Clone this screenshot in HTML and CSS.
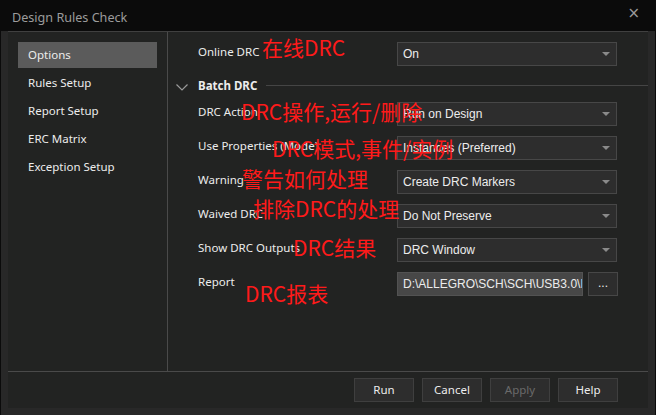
FILE: index.html
```html
<!DOCTYPE html>
<html>
<head>
<meta charset="utf-8">
<link rel="stylesheet" href="styles.css">
</head>
<body>
<div class="window">
  <div class="titlebar">
    <span class="title">Design Rules Check</span>
    <span class="close">×</span>
  </div>
  <div class="frame">
    <div class="inner">
      <div class="main">
        <nav class="sidebar">
          <div class="nav-item active">Options</div>
          <div class="nav-item">Rules Setup</div>
          <div class="nav-item">Report Setup</div>
          <div class="nav-item">ERC Matrix</div>
          <div class="nav-item">Exception Setup</div>
        </nav>
        <section class="content">
          <div class="row">
            <span class="label">Online DRC</span>
            <div class="select"><span>On</span><i class="arrow"></i></div>
          </div>
          <div class="group-head">
            <svg class="chev" width="12" height="7" viewBox="0 0 12 7"><path d="M0.5 0.5 L6 6 L11.5 0.5" fill="none" stroke="#9a9a9a" stroke-width="1.2"/></svg>
            <span class="group-title">Batch DRC</span>
            <span class="group-line"></span>
          </div>
          <div class="rows">
            <div class="row">
              <span class="label">DRC Action</span>
              <div class="select"><span>Run on Design</span><i class="arrow"></i></div>
            </div>
            <div class="row">
              <span class="label">Use Properties (Mode)</span>
              <div class="select"><span>Instances (Preferred)</span><i class="arrow"></i></div>
            </div>
            <div class="row">
              <span class="label">Warning</span>
              <div class="select"><span>Create DRC Markers</span><i class="arrow"></i></div>
            </div>
            <div class="row">
              <span class="label">Waived DRC</span>
              <div class="select"><span>Do Not Preserve</span><i class="arrow"></i></div>
            </div>
            <div class="row">
              <span class="label">Show DRC Outputs</span>
              <div class="select"><span>DRC Window</span><i class="arrow"></i></div>
            </div>
            <div class="row">
              <span class="label">Report</span>
              <div class="file">
                <div class="path">D:\ALLEGRO\SCH\SCH\USB3.0\DRC.rpt</div>
                <div class="browse">...</div>
              </div>
            </div>
          </div>
        </section>
      </div>
      <footer class="footer">
        <button class="btn">Run</button>
        <button class="btn">Cancel</button>
        <button class="btn disabled">Apply</button>
        <button class="btn">Help</button>
      </footer>
    </div>
  </div>
  <span class="note n1">在线DRC</span>
  <span class="note n2">DRC操作,运行/删除</span>
  <span class="note n3">DRC模式,事件/实例</span>
  <span class="note n4">警告如何处理</span>
  <span class="note n5">排除DRC的处理</span>
  <span class="note n6">DRC结果</span>
  <span class="note n7">DRC报表</span>
</div>
</body>
</html>
```
FILE: styles.css
```css
* { box-sizing: border-box; }
html, body { margin: 0; padding: 0; background: #0b0b0b; }
body { font-family: "Noto Sans", "Open Sans", sans-serif; }

.window {
  position: relative;
  width: 656px;
  height: 415px;
  background: #0b0b0b;
  overflow: hidden;
}

.titlebar {
  height: 31px;
  display: flex;
  align-items: center;
  justify-content: space-between;
  padding: 0 16px 0 12px;
}
.title { color: #9c9c9c; font-size: 12.6px; margin-top: 4px; }
.close { color: #9a9a9a; font-size: 15px; font-family: "DejaVu Sans", sans-serif; margin-top: -6px; }

.frame {
  height: 384px;
  margin-left: 1px;
  margin-right: 1px;
  background: #282828;
  padding: 0 7px 6px 7px;
}
.inner {
  height: 377px;
  background: #222322;
  border-top: 1px solid #404040;
  display: flex;
  flex-direction: column;
}
.main {
  height: 340px;
  display: flex;
  border-bottom: 1px solid #4a4a4a;
}

.sidebar {
  width: 160px;
  border-right: 1px solid #4a4a4a;
  padding: 10px 10px 0 10px;
  display: flex;
  flex-direction: column;
  gap: 2px;
}
.nav-item {
  height: 26px;
  line-height: 26px;
  padding-left: 10px;
  color: #ececec;
  font-size: 11.5px;
}
.nav-item.active { background: #5b5b5b; }

.content {
  flex: 1;
  padding: 10px 0 0 30px;
  display: flex;
  flex-direction: column;
}
.row {
  display: flex;
  align-items: center;
  height: 24px;
}
.label {
  width: 199px;
  color: #ececec;
  font-size: 11.5px;
  padding-bottom: 5px;
  white-space: nowrap;
}
.select {
  width: 220px;
  height: 24px;
  background: #2d2d2d;
  border: 1px solid #474747;
  display: flex;
  align-items: center;
  justify-content: space-between;
  padding: 0 6px 1px 5px;
  font-family: "Liberation Sans", Arial, sans-serif;
  font-size: 12px;
  color: #ececec;
}
.arrow {
  width: 0; height: 0;
  border-left: 4px solid transparent;
  border-right: 4px solid transparent;
  border-top: 4px solid #8a8a8a;
  margin-top: 1px;
}

.group-head {
  display: flex;
  align-items: center;
  height: 20px;
  margin: 11px 0 5px -22px;
}
.chev { margin-right: 10px; }
.group-title { color: #ececec; font-size: 11.5px; font-weight: bold; padding-bottom: 3px; }
.group-line { flex: 1; height: 1px; background: #454545; margin-left: 9px; margin-bottom: 4px; }

.rows { display: flex; flex-direction: column; gap: 10px; }

.file { display: flex; gap: 5px; width: 221px; }
.path {
  width: 186px;
  height: 24px;
  background: #474747;
  border: 1px solid #525252;
  padding: 0 5px 1px 5px;
  line-height: 22px;
  overflow: hidden;
  white-space: nowrap;
  font-family: "Liberation Sans", Arial, sans-serif;
  font-size: 12px;
  color: #ececec;
}
.browse {
  width: 30px;
  height: 24px;
  background: #2d2d2d;
  border: 1px solid #474747;
  color: #ececec;
  font-family: "Liberation Sans", Arial, sans-serif;
  font-size: 12px;
  text-align: center;
  line-height: 20px;
}

.footer {
  flex: 1;
  display: flex;
  justify-content: flex-end;
  align-items: center;
  gap: 8px;
  padding: 0 30px 1px 0;
}
.btn {
  width: 60px;
  height: 24px;
  background: #2d2d2d;
  border: 1px solid #3f3f3f;
  color: #ececec;
  font-family: "Noto Sans", sans-serif;
  font-size: 11.5px;
  padding: 0 0 1px 0;
}
.btn.disabled { color: #6a6a6a; }

.note {
  position: absolute;
  color: #ff1a1a;
  font-family: "Noto Sans CJK SC", "Noto Sans", sans-serif;
  font-size: 21px;
  line-height: 22px;
  white-space: nowrap;
}
.n1 { left: 262px; top: 36px; }
.n2 { left: 241px; top: 100px; }
.n3 { left: 272px; top: 137px; }
.n4 { left: 242px; top: 167px; }
.n5 { left: 253px; top: 197px; }
.n6 { left: 293px; top: 236px; }
.n7 { left: 245px; top: 282px; }
```
